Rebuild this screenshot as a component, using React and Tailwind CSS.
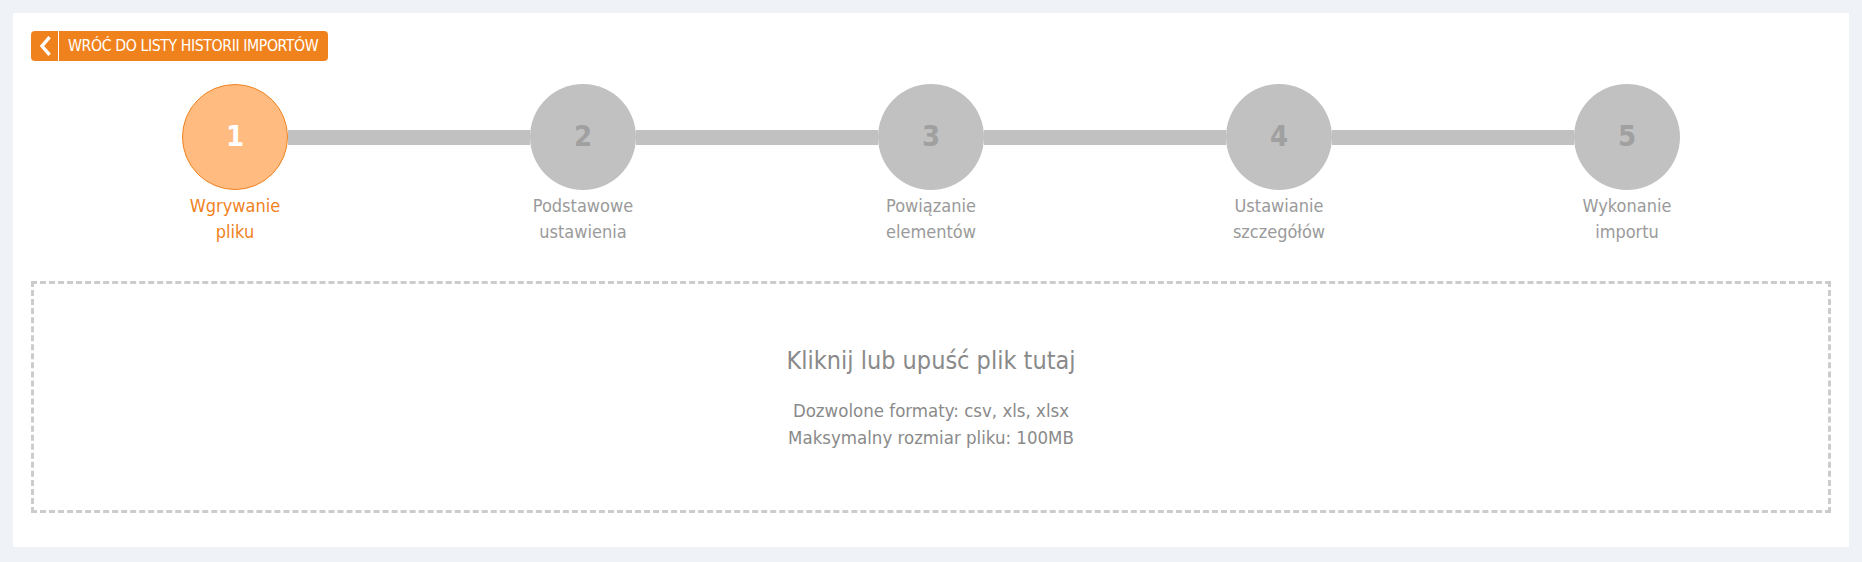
import React from "react";

const steps = [
  ["Wgrywanie", "pliku"],
  ["Podstawowe", "ustawienia"],
  ["Powiązanie", "elementów"],
  ["Ustawianie", "szczegółów"],
  ["Wykonanie", "importu"],
];

const font = { fontFamily: "'DejaVu Sans Condensed','Liberation Sans',sans-serif" };

export default function App() {
  return (
    <div className="w-[1862px] h-[562px] bg-[#eff3f8] p-[13px]" style={font}>
      <div className="bg-white h-[534px] px-[18px] pt-[18px]">
        <button className="flex items-center h-[30px] w-[297px] rounded-[4px] bg-[#f0821e] text-white overflow-hidden">
          <span className="flex shrink-0 items-center justify-center w-[28px] h-full border-r border-white">
            <svg width="14" height="20" viewBox="0 0 14 20">
              <path d="M10.5 2.5 L4 10 L10.5 17.5" fill="none" stroke="white" strokeWidth="3.4" strokeLinecap="square" />
            </svg>
          </span>
          <span className="pl-[9px] text-[15.7px] leading-none uppercase tracking-[-0.4px] whitespace-nowrap">Wróć do listy historii importów</span>
        </button>

        <div className="w-[1740px] mx-auto grid grid-cols-5 mt-[23px]">
          {steps.map((s, i) => {
            const active = i === 0;
            return (
              <div key={i} className="flex flex-col items-center">
                <div className="flex items-center w-full">
                  <div className={`flex-1 h-[15px] ${i === 0 ? "" : "bg-[#c1c1c1]"}`} />
                  <div
                    className={`w-[106px] h-[106px] rounded-full flex items-center justify-center text-[29px] font-bold ${
                      active ? "bg-[#ffbb80] border border-[#f0821e] text-white" : "bg-[#c1c1c1] text-[#a0a0a0]"
                    }`}
                  >
                    {i + 1}
                  </div>
                  <div className={`flex-1 h-[15px] ${i === 4 ? "" : "bg-[#c1c1c1]"}`} />
                </div>
                <div className={`mt-[3px] text-[18px] leading-[26px] text-center ${active ? "text-[#f0821e]" : "text-[#9a9a9a]"}`}>
                  <div>{s[0]}</div>
                  <div>{s[1]}</div>
                </div>
              </div>
            );
          })}
        </div>

        <div className="mt-[36px] h-[232px] border-[3px] border-dashed border-[#cccccc] flex flex-col items-center justify-center text-[#8a8a8a]">
          <div className="text-[25px] leading-[36px]">Kliknij lub upuść plik tutaj</div>
          <div className="mt-[18px] text-[18.5px] leading-[27px] text-center">
            <div>Dozwolone formaty: csv, xls, xlsx</div>
            <div>Maksymalny rozmiar pliku: 100MB</div>
          </div>
        </div>
      </div>
    </div>
  );
}
